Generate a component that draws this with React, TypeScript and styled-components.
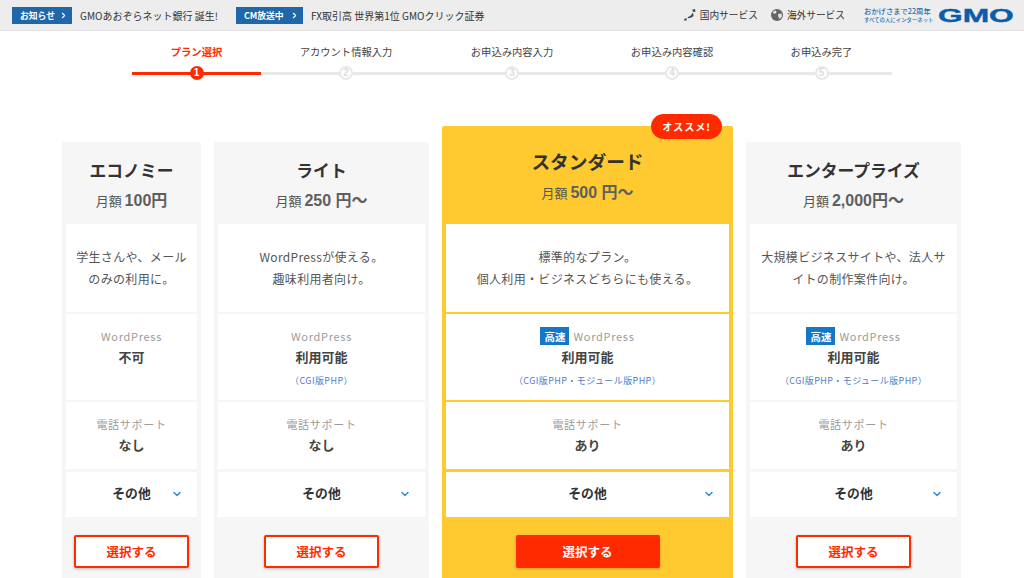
import React from 'react';
import styled, { createGlobalStyle } from 'styled-components';
import { ChevronDown, ChevronRight } from 'lucide-react';

const GlobalStyle = createGlobalStyle`
  html, body {
    margin: 0;
    background: #fff;
    font-family: "Noto Sans CJK JP", "Noto Sans", sans-serif;
    color: #444;
  }
  * { box-sizing: border-box; }
`;

const Page = styled.div`
  height: 578px;
  overflow: hidden;
`;

const TopBar = styled.header`
  height: 31px;
  padding: 0 12px;
  display: flex;
  align-items: center;
  background: #ededed;
  border-bottom: 1px solid #e2e2e2;
`;

const News = styled.div<{ $width: number }>`
  width: ${(p) => p.$width}px;
  display: flex;
  align-items: center;
`;

const NewsTag = styled.span<{ $width: number }>`
  width: ${(p) => p.$width}px;
  height: 17px;
  margin-right: 8px;
  padding: 0 4px 0 8px;
  display: flex;
  align-items: center;
  justify-content: space-between;
  background: #1f67a8;
  color: #fff;
  font-size: 8.8px;
  font-weight: 700;
  white-space: nowrap;
`;

const NewsText = styled.span`
  font-size: 10px;
  color: #333;
  white-space: nowrap;
`;

const TopRight = styled.nav`
  margin-left: auto;
  display: flex;
  align-items: center;
`;

const Service = styled.span`
  margin-right: 13px;
  display: flex;
  align-items: center;
  gap: 4px;
  font-size: 9.7px;
  color: #333;
  white-space: nowrap;
`;

const Tagline = styled.div`
  width: 70px;
  margin: 0 4px 0 6px;
  color: #2a6eb0;
  font-weight: 500;
  white-space: nowrap;
`;

const TaglineTop = styled.div`
  font-size: 7.3px;
  line-height: 9px;
`;

const TaglineBottom = styled.div`
  font-size: 5.4px;
  line-height: 8px;
`;

const LogoBox = styled.div`
  width: 74px;
  height: 20px;
  line-height: 20px;
`;

const LogoText = styled.span`
  display: inline-block;
  font-family: "Liberation Sans", sans-serif;
  font-weight: 700;
  font-size: 19px;
  color: #0b5cab;
  -webkit-text-stroke: 0.4px #0b5cab;
  transform: scaleX(1.67);
  transform-origin: left center;
`;

const Stepper = styled.ol`
  margin: 0;
  padding: 0 0 0 132px;
  height: 95px;
  list-style: none;
  display: flex;
`;

const Step = styled.li<{ $width: number; $active?: boolean }>`
  width: ${(p) => p.$width}px;
  padding-top: 14px;
  display: flex;
  flex-direction: column;
  align-items: center;
  gap: 7px;
  font-size: 10.3px;
  line-height: 14px;
  white-space: nowrap;
  color: ${(p) => (p.$active ? '#ff2a00' : '#444')};
  font-weight: ${(p) => (p.$active ? 700 : 400)};
`;

const StepTrack = styled.div<{ $active?: boolean }>`
  align-self: stretch;
  height: 14px;
  display: flex;
  align-items: center;
  justify-content: center;
  background: linear-gradient(${(p) => (p.$active ? '#ff2a00' : '#e8e8e8')}, ${(p) => (p.$active ? '#ff2a00' : '#e8e8e8')}) center / 100% 3px no-repeat;
`;

const StepDot = styled.span<{ $active?: boolean }>`
  width: 14px;
  height: 14px;
  border-radius: 50%;
  display: flex;
  align-items: center;
  justify-content: center;
  font-family: "Liberation Sans", sans-serif;
  font-size: 10px;
  font-weight: 700;
  color: ${(p) => (p.$active ? '#fff' : '#ddd')};
  background: ${(p) => (p.$active ? '#ff2a00' : '#fff')};
  border: 2px solid ${(p) => (p.$active ? '#ff2a00' : '#e8e8e8')};
`;

const Plans = styled.main`
  padding-right: 1px;
  display: flex;
  justify-content: center;
  align-items: flex-start;
  gap: 13px;
`;

const Card = styled.section<{ $width: number; $featured?: boolean }>`
  position: relative;
  width: ${(p) => p.$width}px;
  margin-top: ${(p) => (p.$featured ? 0 : 16)}px;
  padding: 0 4px 30px;
  background: ${(p) => (p.$featured ? '#ffca30' : '#f6f6f6')};
  border-radius: 2px;
  text-align: center;
`;

const Recommend = styled.span`
  position: absolute;
  top: -12px;
  right: 11px;
  width: 71px;
  height: 25px;
  border-radius: 13px;
  display: flex;
  align-items: center;
  justify-content: center;
  background: #ff2a00;
  color: #fff;
  font-size: 10px;
  font-weight: 700;
  letter-spacing: 1px;
`;

const CardHead = styled.div<{ $featured?: boolean }>`
  height: ${(p) => (p.$featured ? 98 : 82)}px;
  padding-top: ${(p) => (p.$featured ? 22 : 15)}px;
`;

const PlanName = styled.h2<{ $featured?: boolean }>`
  margin: 0;
  font-size: ${(p) => (p.$featured ? 18.7 : 16.8)}px;
  line-height: 26px;
  font-weight: 700;
  color: #333;
  white-space: nowrap;
`;

const Price = styled.p<{ $featured?: boolean }>`
  margin: ${(p) => (p.$featured ? 8 : 7)}px 0 0;
  font-size: 13px;
  line-height: 22px;
  color: #555;
  white-space: nowrap;
`;

const Amount = styled.b`
  font-family: "Liberation Sans", "Noto Sans CJK JP", sans-serif;
  font-size: 16px;
  font-weight: 700;
  color: #5f5f5f;
`;

const Rows = styled.div`
  display: flex;
  flex-direction: column;
  gap: 2px;
`;

const Row = styled.div<{ $height: number }>`
  height: ${(p) => p.$height}px;
  background: #fff;
`;

const Description = styled(Row)`
  padding: 22px 8px 0;
  font-size: 12px;
  line-height: 22px;
  letter-spacing: 0.33px;
  color: #555;
`;

const Spec = styled(Row)`
  padding-top: 13px;
`;

const SpecLabel = styled.div`
  height: 18px;
  display: flex;
  align-items: center;
  justify-content: center;
  gap: 4px;
  font-size: 11px;
  letter-spacing: 0.7px;
  color: #9c9c9c;
`;

const FastTag = styled.span`
  width: 29px;
  height: 18px;
  display: flex;
  align-items: center;
  justify-content: center;
  background: #1478c8;
  color: #fff;
  font-size: 10.5px;
  font-weight: 700;
  letter-spacing: 0;
`;

const SpecValue = styled.div`
  margin-top: 1px;
  font-size: 13px;
  line-height: 22px;
  font-weight: 700;
  color: #444;
`;

const SpecNote = styled.div`
  margin-top: 6px;
  font-size: 9px;
  line-height: 14px;
  letter-spacing: 0.4px;
  color: #4f80c8;
  white-space: nowrap;
`;

const Other = styled(Row)`
  padding-bottom: 4px;
  display: grid;
  grid-template-columns: 1fr auto 1fr;
  align-items: center;
  margin-top: 1px;
  font-size: 12.8px;
  font-weight: 700;
  color: #333;
`;

const OtherIcon = styled.span`
  justify-self: end;
  padding: 3px 14px 0 0;
  display: flex;
  color: #2f8fd0;
`;

const ButtonRow = styled.div`
  margin-top: 18px;
  display: flex;
  justify-content: center;
`;

const SelectButton = styled.button<{ $featured?: boolean }>`
  width: ${(p) => (p.$featured ? 144 : 115)}px;
  height: 33px;
  padding: 0;
  border: 2px solid #ff2a00;
  border-radius: 2px;
  background: ${(p) => (p.$featured ? '#ff2a00' : '#fff')};
  color: ${(p) => (p.$featured ? '#fff' : '#ff2a00')};
  box-shadow: 0 1px 3px rgba(0, 0, 0, 0.25);
  font-family: inherit;
  font-size: 12.5px;
  font-weight: 700;
`;

const JapanIcon = () => (
  <svg width="12" height="12" viewBox="0 0 12 12" aria-hidden="true">
    <path d="M8.500 0.500l2.500-.5.500 2.500-2 .8-1-1.300z M8.500 3.800l1.200 2.300-.7 1.700-3 1.300-2 .2-.3-1.300 2.600-1 1.200-1.500z M0.500 9.500h2.500l-.5 2H0z" fill="#4d4d4d" />
  </svg>
);

const GlobeIcon = () => (
  <svg width="12" height="12" viewBox="0 0 12 12" aria-hidden="true">
    <circle cx="6" cy="6" r="6" fill="#666" />
    <path d="M2 2.500l3-1 .5 2L4 5 2 4z M7 5l3.500-.5.500 3L8.500 10 7.500 8z" fill="#e4e4e4" />
  </svg>
);

const steps = [
  { label: 'プラン選択', width: 129 },
  { label: 'アカウント情報入力', width: 170 },
  { label: 'お申込み内容入力', width: 162 },
  { label: 'お申込み内容確認', width: 158 },
  { label: 'お申込み完了', width: 141 },
];

interface Plan {
  name: string,
  width: number,
  featured?: boolean,
  amount: string,
  description: string[],
  fast?: boolean,
  wordpress: string,
  note?: string,
  phone: string,
}

const plans: Plan[] = [
  {
    name: 'エコノミー',
    width: 139,
    amount: '100円',
    description: ['学生さんや、メール', 'のみの利用に。'],
    wordpress: '不可',
    phone: 'なし',
  },
  {
    name: 'ライト',
    width: 215,
    amount: '250 円〜',
    description: ['WordPressが使える。', '趣味利用者向け。'],
    wordpress: '利用可能',
    note: '（CGI版PHP）',
    phone: 'なし',
  },
  {
    name: 'スタンダード',
    width: 291,
    featured: true,
    amount: '500 円〜',
    description: ['標準的なプラン。', '個人利用・ビジネスどちらにも使える。'],
    fast: true,
    wordpress: '利用可能',
    note: '（CGI版PHP・モジュール版PHP）',
    phone: 'あり',
  },
  {
    name: 'エンタープライズ',
    width: 215,
    amount: '2,000円〜',
    description: ['大規模ビジネスサイトや、法人サ', 'イトの制作案件向け。'],
    fast: true,
    wordpress: '利用可能',
    note: '（CGI版PHP・モジュール版PHP）',
    phone: 'あり',
  },
];

const App: React.FC = () => (
  <Page>
    <GlobalStyle />
    <TopBar>
      <News $width={224}>
        <NewsTag $width={60}>お知らせ<ChevronRight size={9} strokeWidth={3} /></NewsTag>
        <NewsText>GMOあおぞらネット銀行 誕生!</NewsText>
      </News>
      <News $width={260}>
        <NewsTag $width={67}>CM放送中<ChevronRight size={9} strokeWidth={3} /></NewsTag>
        <NewsText>FX取引高 世界第1位 GMOクリック証券</NewsText>
      </News>
      <TopRight>
        <Service><JapanIcon />国内サービス</Service>
        <Service><GlobeIcon />海外サービス</Service>
        <Tagline>
          <TaglineTop>おかげさまで22周年</TaglineTop>
          <TaglineBottom>すべての人にインターネット</TaglineBottom>
        </Tagline>
        <LogoBox><LogoText>GMO</LogoText></LogoBox>
      </TopRight>
    </TopBar>

    <Stepper>
      {steps.map((step, i) => (
        <Step key={step.label} $width={step.width} $active={i === 0}>
          {step.label}
          <StepTrack $active={i === 0}>
            <StepDot $active={i === 0}>{i + 1}</StepDot>
          </StepTrack>
        </Step>
      ))}
    </Stepper>

    <Plans>
      {plans.map((plan) => (
        <Card key={plan.name} $width={plan.width} $featured={plan.featured}>
          {plan.featured && <Recommend>オススメ!</Recommend>}
          <CardHead $featured={plan.featured}>
            <PlanName $featured={plan.featured}>{plan.name}</PlanName>
            <Price $featured={plan.featured}>
              月額 <Amount>{plan.amount}</Amount>
            </Price>
          </CardHead>
          <Rows>
            <Description $height={88}>
              {plan.description.map((line) => <div key={line}>{line}</div>)}
            </Description>
            <Spec $height={86}>
              <SpecLabel>
                {plan.fast && <FastTag>高速</FastTag>}
                WordPress
              </SpecLabel>
              <SpecValue>{plan.wordpress}</SpecValue>
              {plan.note && <SpecNote>{plan.note}</SpecNote>}
            </Spec>
            <Spec $height={67}>
              <SpecLabel>電話サポート</SpecLabel>
              <SpecValue>{plan.phone}</SpecValue>
            </Spec>
            <Other $height={45}>
              <span />
              その他
              <OtherIcon><ChevronDown size={12} strokeWidth={3} /></OtherIcon>
            </Other>
          </Rows>
          <ButtonRow>
            <SelectButton $featured={plan.featured}>選択する</SelectButton>
          </ButtonRow>
        </Card>
      ))}
    </Plans>
  </Page>
);

export default App;
